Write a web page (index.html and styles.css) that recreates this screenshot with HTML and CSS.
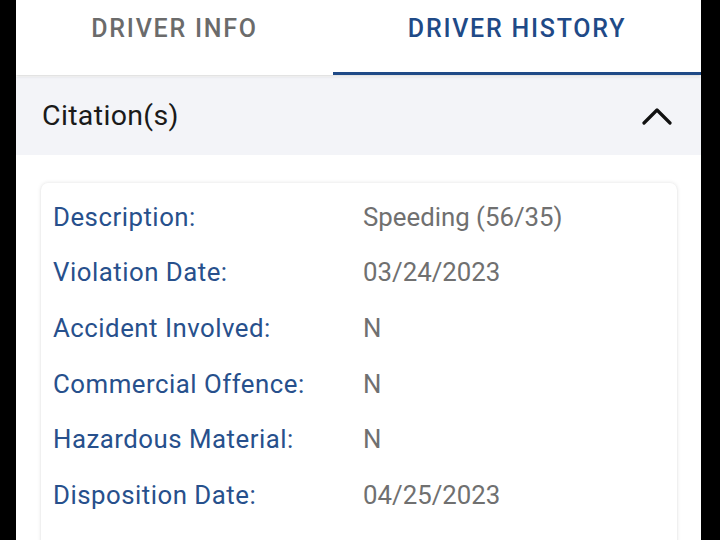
FILE: index.html
```html
<!DOCTYPE html>
<html>
<head>
<meta charset="utf-8">
<link rel="stylesheet" href="styles.css">
</head>
<body>
<div class="screen">
  <div class="tabs">
    <div class="tab">DRIVER INFO</div>
    <div class="tab active">DRIVER HISTORY</div>
  </div>
  <div class="section-head">
    <span class="section-title">Citation(s)</span>
    <svg class="chevron" width="30" height="18" viewBox="0 0 30 18"><path d="M2 16 L15 3 L28 16" fill="none" stroke="#111" stroke-width="3.2" stroke-linecap="round" stroke-linejoin="round"/></svg>
  </div>
  <div class="content">
    <div class="card">
      <div class="row"><span class="label">Description:</span><span class="value">Speeding (56/35)</span></div>
      <div class="row"><span class="label">Violation Date:</span><span class="value">03/24/2023</span></div>
      <div class="row"><span class="label">Accident Involved:</span><span class="value">N</span></div>
      <div class="row"><span class="label">Commercial Offence:</span><span class="value">N</span></div>
      <div class="row"><span class="label">Hazardous Material:</span><span class="value">N</span></div>
      <div class="row"><span class="label">Disposition Date:</span><span class="value">04/25/2023</span></div>
      <div class="row"><span class="label">Disposition:</span><span class="value">Convicted</span></div>
    </div>
  </div>
</div>
</body>
</html>
```

FILE: styles.css
```css
html, body {
  margin: 0;
  padding: 0;
  background: #000;
  height: 540px;
  overflow: hidden;
}
.screen {
  margin: 0 19px 0 16px;
  height: 540px;
  background: #fff;
  font-family: Roboto, "Noto Sans", sans-serif;
  overflow: hidden;
}
.tabs {
  display: grid;
  grid-template-columns: 317px 1fr;
  height: 75px;
  position: relative;
  z-index: 2;
  box-shadow: 0 1px 3px rgba(0,0,0,0.18);
  background: #fff;
}
.tab {
  display: flex;
  justify-content: center;
  align-items: flex-start;
  padding-top: 14px;
  font-size: 25px;
  font-weight: 500;
  letter-spacing: 1.75px;
  color: #6b6b6b;
  border-bottom: 3px solid transparent;
}
.tab.active {
  color: #1f4a87;
  border-bottom-color: #1f4a87;
}
.section-head {
  height: 78px;
  margin-top: 2px;
  background: #f3f4f8;
  display: flex;
  align-items: center;
  justify-content: space-between;
  padding: 0 29px 0 26px;
}
.section-title {
  font-size: 28.5px;
  letter-spacing: 0.35px;
  color: #1a1a1a;
  margin-top: -2px;
}
.chevron {
  display: block;
}
.content {
  padding: 28px 24px 0 25px;
}
.card {
  background: #fff;
  border-radius: 7px;
  box-shadow: 0 0 4px rgba(0,0,0,0.12), 0 1px 2px rgba(0,0,0,0.06);
  padding: 6px 12px 0 12px;
}
.row {
  display: grid;
  grid-template-columns: 310px 1fr;
  height: 55.6px;
  align-items: center;
  font-size: 25.8px;
}
.label {
  color: #27508c;
  letter-spacing: 0.5px;
}
.value {
  color: #707070;
}
```
